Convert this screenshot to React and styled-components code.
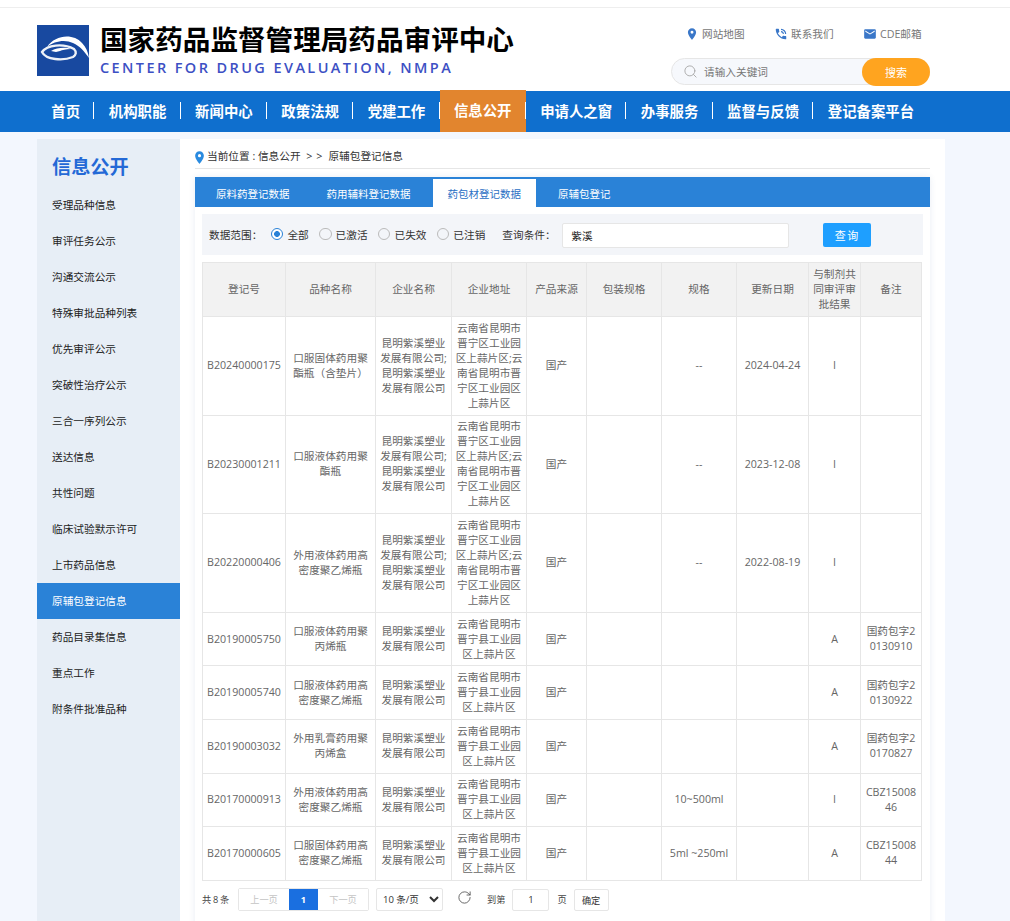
import React from "react";
import styled, { createGlobalStyle } from "styled-components";
import { Search, RotateCw } from "lucide-react";
import { MdPhoneInTalk, MdEmail, MdLocationOn } from "react-icons/md";

const FONT = `"Open Sans", "Noto Sans CJK SC", sans-serif`;

const GlobalStyle = createGlobalStyle`
html, body {
    margin: 0;
    padding: 0;
    background: #f3f7fe;
}
* {
    box-sizing: border-box;
}
`;

const Page = styled.div`
width: 1010px;
height: 921px;
overflow: hidden;
font-family: ${FONT};
font-size: 10.67px;
color: #333;
background: #f3f7fe;
`;

const TopBar = styled.div`
height: 8px;
background: #fff;
border-bottom: 1px solid #eee;
`;

const Header = styled.header`
height: 83px;
background: #fff;
padding: 0 80px 0 37px;
display: flex;
justify-content: space-between;
`;

const Brand = styled.div`
display: flex;
align-items: flex-start;
padding-top: 17px;
`;

const BrandText = styled.div`
margin-left: 11px;
`;

const BrandTitle = styled.div`
font-family: "Noto Sans CJK SC", sans-serif;
font-size: 27.6px;
line-height: 30px;
font-weight: 700;
color: #000;
margin-top: -2px;
white-space: nowrap;
`;

const BrandSub = styled.div`
font-size: 14.5px;
line-height: 18px;
font-weight: 600;
letter-spacing: 2.4px;
color: #3c50c4;
margin-top: 6px;
white-space: nowrap;
`;

const Tools = styled.div`
width: 259px;
`;

const LinkRow = styled.div`
display: flex;
height: 50px;
padding: 18px 0 0 14px;
`;

const TopLink = styled.a`
display: flex;
align-items: center;
height: 15px;
width: ${(p) => p.$width}px;
color: #777;
white-space: nowrap;
& svg {
    color: #3a77c8;
    margin-right: 3px;
    flex: none;
}
`;

const SearchBox = styled.div`
display: flex;
align-items: center;
height: 27px;
background: #f6f8fc;
border: 1px solid #e6e6e6;
border-radius: 14px;
padding-left: 11px;
position: relative;
color: #aaa;
`;

const SearchHolder = styled.span`
margin-left: 6px;
color: #777;
font-size: 10.67px;
`;

const SearchBtn = styled.button`
position: absolute;
right: -1px;
top: -1px;
width: 68px;
height: 28px;
border: 0;
border-radius: 14px;
background: #ffa41f;
color: #fff;
font-family: ${FONT};
font-size: 11px;
`;

const Nav = styled.nav`
height: 41px;
background: #0f6fce;
display: flex;
padding-left: 37px;
`;

const NavItem = styled.a`
position: relative;
display: flex;
align-items: center;
height: ${(p) => (p.$active ? 42 : 41)}px;
margin-top: ${(p) => (p.$active ? -1 : 0)}px;
padding: 0 14.35px 3px;
background: ${(p) => (p.$active ? "#e2852e" : "transparent")};
color: #fff;
font-size: 14.4px;
font-weight: 700;
white-space: nowrap;
&:not(:last-child)::after {
    content: "";
    position: absolute;
    right: 0;
    top: ${(p) => (p.$active ? 12 : 11)}px;
    width: 1px;
    height: 17px;
    background: #fff;
}
`;

const Content = styled.div`
width: 945px;
margin-top: 7px;
padding-left: 37px;
display: flex;
`;

const Sidebar = styled.aside`
width: 143px;
height: 790px;
background: #e7eef6;
flex: none;
`;

const SideTitle = styled.h2`
margin: 0;
height: 48px;
padding: 14px 0 0 15px;
font-size: 19.2px;
line-height: 27px;
font-weight: 700;
color: #2469d6;
`;

const SideItem = styled.a`
display: block;
height: 36px;
line-height: 36px;
padding-left: 15px;
font-size: 10.67px;
color: ${(p) => (p.$active ? "#fff" : "#222")};
background: ${(p) => (p.$active ? "#2a82d7" : "transparent")};
`;

const Main = styled.main`
flex: 1;
height: 790px;
background: #fff;
padding: 0 15px;
`;

const Crumb = styled.div`
height: 30px;
padding-top: 10px;
display: flex;
align-items: flex-start;
line-height: 15px;
border-bottom: 1px solid #e6e6e6;
color: #333;
white-space: pre;
& svg {
    color: #2a8be0;
    margin: 1px 0 0 -3px;
    flex: none;
}
`;

const CrumbArrows = styled.span`
letter-spacing: 0.6px;
`;

const Panel = styled.section`
margin-top: 8px;
height: 760px;
box-shadow: 0 0 6px rgba(60, 100, 160, 0.12);
`;

const TabBar = styled.div`
height: 30px;
background: #2a82d7;
display: flex;
align-items: flex-end;
padding-left: 6px;
gap: 7px;
`;

const Tab = styled.a`
height: 28px;
line-height: 30px;
padding: 0 15px;
font-size: 10.5px;
color: ${(p) => (p.$active ? "#2a6fc4" : "#fff")};
background: ${(p) => (p.$active ? "#fff" : "transparent")};
`;

const PanelBody = styled.div`
padding: 7px;
`;

const Filter = styled.div`
height: 41px;
background: #f3f5f9;
display: flex;
align-items: center;
padding-left: 7px;
`;

const FilterLabel = styled.span`
color: #333;
white-space: nowrap;
margin-left: ${(p) => p.$left || 0}px;
margin-right: ${(p) => p.$gap || 0}px;
`;

const RadioLabel = styled.label`
display: flex;
align-items: center;
margin-right: 10.4px;
color: #333;
white-space: nowrap;
`;

const Radio = styled.input.attrs({ type: "radio", name: "range" })`
appearance: none;
width: 12.5px;
height: 12.5px;
margin: 0 4px 1px 0;
border-radius: 50%;
border: 1px solid #bbb;
background: #f3f5f9;
&:checked {
    border-color: #2a82d7;
    background: radial-gradient(circle, #2a82d7 0 2.6px, #fff 3.2px);
}
`;

const KeywordInput = styled.input`
width: 226.5px;
height: 25px;
margin: 2px 0 0 6.6px;
padding: 0 8px;
border: 1px solid #e6e6e6;
border-radius: 2px;
background: #fff;
font-family: ${FONT};
font-size: 10.67px;
color: #222;
outline: none;
`;

const QueryBtn = styled.button`
width: 48px;
height: 24px;
margin: 1px 0 0 34.5px;
border: 0;
border-radius: 2px;
background: #1e9fff;
color: #fff;
font-family: ${FONT};
font-size: 11px;
letter-spacing: 1.5px;
`;

const Table = styled.table`
width: 719px;
margin-top: 7px;
table-layout: fixed;
border-collapse: collapse;
color: #666;
line-height: 15px;
& th, & td {
    border: 1px solid #e6e6e6;
    padding: 3.8px 3.5px;
    text-align: center;
    vertical-align: middle;
    word-break: break-all;
    font-weight: 400;
}
& th {
    background: #f2f2f2;
    height: 54px;
}
`;

const Col = styled.col`
width: ${(p) => p.$width}px;
`;

const Pager = styled.div`
margin-top: 7px;
display: flex;
align-items: center;
height: 23px;
font-size: 9.2px;
color: #444;
white-space: nowrap;
`;

const PagerTotal = styled.span`
width: 28px;
word-spacing: -0.6px;
`;

const PageGroup = styled.div`
display: flex;
height: 23px;
margin-left: 8px;
border: 1px solid #e6e6e6;
border-radius: 2px;
`;

const PageBtn = styled.a`
width: ${(p) => p.$width}px;
line-height: 21px;
text-align: center;
background: ${(p) => (p.$active ? "#1a6fe0" : "#fff")};
color: ${(p) => (p.$active ? "#fff" : "#c4c4c4")};
font-weight: ${(p) => (p.$active ? 700 : 400)};
`;

const SizeSelect = styled.select`
width: 67px;
height: 23px;
margin-left: 7px;
border: 1px solid #e6e6e6;
border-radius: 2px;
background: #fff;
color: #333;
font-family: ${FONT};
font-size: 9.5px;
padding: 0 0 0 2px;
`;

const RefreshIcon = styled(RotateCw)`
margin: 0 15px 4px 14px;
color: #555;
`;

const JumpInput = styled.input`
width: 37px;
height: 22px;
margin: 1px 8px 0 7px;
border: 1px solid #e6e6e6;
border-radius: 2px;
text-align: center;
font-family: ${FONT};
font-size: 9.5px;
color: #333;
padding: 0;
outline: none;
`;

const ConfirmBtn = styled.button`
width: 35px;
height: 22px;
margin: 1px 0 0 7px;
border: 1px solid #e6e6e6;
border-radius: 2px;
background: #fff;
color: #333;
font-family: ${FONT};
font-size: 9.2px;
padding: 0;
`;

const NAV = ["首页", "机构职能", "新闻中心", "政策法规", "党建工作", "信息公开", "申请人之窗", "办事服务", "监督与反馈", "登记备案平台"];
const SIDE = ["受理品种信息", "审评任务公示", "沟通交流公示", "特殊审批品种列表", "优先审评公示", "突破性治疗公示", "三合一序列公示", "送达信息", "共性问题", "临床试验默示许可", "上市药品信息", "原辅包登记信息", "药品目录集信息", "重点工作", "附条件批准品种"];
const TABS = ["原料药登记数据", "药用辅料登记数据", "药包材登记数据", "原辅包登记"];
const COLS = [83, 90, 76, 75, 60, 75, 75, 72, 52, 61];
const HEADS = ["登记号", "品种名称", "企业名称", "企业地址", "产品来源", "包装规格", "规格", "更新日期", "与制剂共同审评审批结果", "备注"];

const COMPANY2 = "昆明紫溪塑业发展有限公司;昆明紫溪塑业发展有限公司";
const COMPANY = "昆明紫溪塑业发展有限公司";
const ADDR2 = "云南省昆明市晋宁区工业园区上蒜片区;云南省昆明市晋宁区工业园区上蒜片区";
const ADDR = "云南省昆明市晋宁县工业园区上蒜片区";

const ROWS = [
    ["B20240000175", "口服固体药用聚酯瓶（含垫片）", COMPANY2, ADDR2, "--", "2024-04-24", "I", ""],
    ["B20230001211", "口服液体药用聚酯瓶", COMPANY2, ADDR2, "--", "2023-12-08", "I", ""],
    ["B20220000406", "外用液体药用高密度聚乙烯瓶", COMPANY2, ADDR2, "--", "2022-08-19", "I", ""],
    ["B20190005750", "口服液体药用聚丙烯瓶", COMPANY, ADDR, "", "", "A", "国药包字20130910"],
    ["B20190005740", "口服液体药用高密度聚乙烯瓶", COMPANY, ADDR, "", "", "A", "国药包字20130922"],
    ["B20190003032", "外用乳膏药用聚丙烯盒", COMPANY, ADDR, "", "", "A", "国药包字20170827"],
    ["B20170000913", "外用液体药用高密度聚乙烯瓶", COMPANY, ADDR, "10~500ml", "", "I", "CBZ1500846"],
    ["B20170000605", "口服固体药用高密度聚乙烯瓶", COMPANY, ADDR, "5ml ~250ml", "", "A", "CBZ1500844"],
];

const Logo = () => (
    <svg width="52" height="51" viewBox="0 0 52 51">
        <rect width="52" height="51" fill="#1849a0" />
        <path d="M10 22C18 10 36 8 45 18c4 4 6 9 7 15-5-7-9-12-16-15-8-4-19-2-26 4z" fill="#fff" />
        <path d="M5 27c5-7 21-9 32-3 3 3 2 6-1 8-10 4-27 3-31-5z" fill="none" stroke="#eef2f8" strokeWidth="2.4" />
        <path d="M14 26c6-4 16-4 20-2-5 0-9 1-11 2l-4 1z" fill="#fff" />
    </svg>
);

export default function App() {
    return (
        <Page>
            <GlobalStyle />
            <TopBar />
            <Header>
                <Brand>
                    <Logo />
                    <BrandText>
                        <BrandTitle>国家药品监督管理局药品审评中心</BrandTitle>
                        <BrandSub>CENTER FOR DRUG EVALUATION, NMPA</BrandSub>
                    </BrandText>
                </Brand>
                <Tools>
                    <LinkRow>
                        <TopLink $width={89}><MdLocationOn size={14} />网站地图</TopLink>
                        <TopLink $width={89}><MdPhoneInTalk size={14} />联系我们</TopLink>
                        <TopLink $width={60}><MdEmail size={14} />CDE邮箱</TopLink>
                    </LinkRow>
                    <SearchBox>
                        <Search size={15} strokeWidth={1.5} />
                        <SearchHolder>请输入关键词</SearchHolder>
                        <SearchBtn>搜索</SearchBtn>
                    </SearchBox>
                </Tools>
            </Header>
            <Nav>
                {NAV.map((n) => (
                    <NavItem key={n} $active={n === "信息公开"}>{n}</NavItem>
                ))}
            </Nav>
            <Content>
                <Sidebar>
                    <SideTitle>信息公开</SideTitle>
                    {SIDE.map((s) => (
                        <SideItem key={s} $active={s === "原辅包登记信息"}>{s}</SideItem>
                    ))}
                </Sidebar>
                <Main>
                    <Crumb>
                        <MdLocationOn size={15} />
                        <span>当前位置 : 信息公开  <CrumbArrows>&gt; &gt;</CrumbArrows>  原辅包登记信息</span>
                    </Crumb>
                    <Panel>
                        <TabBar>
                            {TABS.map((t) => (
                                <Tab key={t} $active={t === "药包材登记数据"}>{t}</Tab>
                            ))}
                        </TabBar>
                        <PanelBody>
                            <Filter>
                                <FilterLabel $gap={8.6}>数据范围：</FilterLabel>
                                <RadioLabel><Radio defaultChecked />全部</RadioLabel>
                                <RadioLabel><Radio />已激活</RadioLabel>
                                <RadioLabel><Radio />已失效</RadioLabel>
                                <RadioLabel><Radio />已注销</RadioLabel>
                                <FilterLabel $left={6.6}>查询条件：</FilterLabel>
                                <KeywordInput defaultValue="紫溪" />
                                <QueryBtn>查询</QueryBtn>
                            </Filter>
                            <Table>
                                <colgroup>
                                    {COLS.map((w, i) => <Col key={i} $width={w} />)}
                                </colgroup>
                                <thead>
                                    <tr>{HEADS.map((h) => <th key={h}>{h}</th>)}</tr>
                                </thead>
                                <tbody>
                                    {ROWS.map((r) => (
                                        <tr key={r[0]}>
                                            <td>{r[0]}</td>
                                            <td>{r[1]}</td>
                                            <td>{r[2]}</td>
                                            <td>{r[3]}</td>
                                            <td>国产</td>
                                            <td></td>
                                            <td>{r[4]}</td>
                                            <td>{r[5]}</td>
                                            <td>{r[6]}</td>
                                            <td>{r[7]}</td>
                                        </tr>
                                    ))}
                                </tbody>
                            </Table>
                            <Pager>
                                <PagerTotal>共 8 条</PagerTotal>
                                <PageGroup>
                                    <PageBtn $width={50}>上一页</PageBtn>
                                    <PageBtn $width={29} $active>1</PageBtn>
                                    <PageBtn $width={50}>下一页</PageBtn>
                                </PageGroup>
                                <SizeSelect defaultValue="10">
                                    <option value="10">10 条/页</option>
                                </SizeSelect>
                                <RefreshIcon size={15} strokeWidth={1.4} />
                                <span>到第</span>
                                <JumpInput defaultValue="1" />
                                <span>页</span>
                                <ConfirmBtn>确定</ConfirmBtn>
                            </Pager>
                        </PanelBody>
                    </Panel>
                </Main>
            </Content>
        </Page>
    );
}
